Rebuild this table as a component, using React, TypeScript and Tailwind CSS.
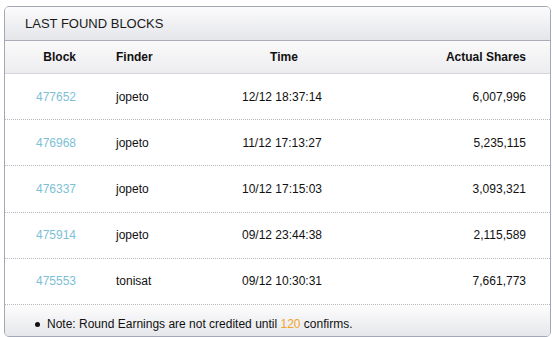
import React from "react";

const rows = [
  { block: "477652", finder: "jopeto", time: "12/12 18:37:14", shares: "6,007,996" },
  { block: "476968", finder: "jopeto", time: "11/12 17:13:27", shares: "5,235,115" },
  { block: "476337", finder: "jopeto", time: "10/12 17:15:03", shares: "3,093,321" },
  { block: "475914", finder: "jopeto", time: "09/12 23:44:38", shares: "2,115,589" },
  { block: "475553", finder: "tonisat", time: "09/12 10:30:31", shares: "7,661,773" },
];

export default function App() {
  return (
    <div className="w-[552px] h-[337px] bg-white overflow-hidden pt-[6px] pl-[4px]" style={{ fontFamily: '"Liberation Sans", Arial, sans-serif' }}>
      <div className="w-[547px] h-[331px] border border-[#a4a7b5] rounded-t-[5px] rounded-b-[5px] bg-white flex flex-col overflow-hidden">
        <div className="h-[34px] shrink-0 border-b border-[#a9acb8] bg-gradient-to-b from-[#fbfbfc] to-[#e5e6ea] flex items-center pl-[20px] text-[13px] text-[#1a1a1a]">
          LAST FOUND BLOCKS
        </div>
        <div className="h-[33px] shrink-0 border-b border-[#d3d6de] bg-gradient-to-b from-[#fafafa] to-[#ededf0] flex items-center text-[12px] font-bold text-[#111]">
          <div className="w-[91px] text-right pr-[20px]">Block</div>
          <div className="w-[100px] pl-[20px]">Finder</div>
          <div className="w-[176px] text-center">Time</div>
          <div className="flex-1 text-right pr-[24px]">Actual Shares</div>
        </div>
        {rows.map((r) => (
          <div key={r.block} className="h-[46.2px] shrink-0 border-b border-dotted border-[#b8b8b8] flex items-center text-[12px] text-[#111]">
            <div className="w-[91px] text-right pr-[20px] text-[#7dbfd6]">{r.block}</div>
            <div className="w-[100px] pl-[20px]">{r.finder}</div>
            <div className="w-[172px] text-center">{r.time}</div>
            <div className="flex-1 text-right pr-[24px]">{r.shares}</div>
          </div>
        ))}
        <div className="flex-1 bg-gradient-to-b from-[#fdfdfd] to-[#e6e7eb] flex items-start pt-[12px] pl-[30px] text-[12px] leading-[14px] text-[#111]">
          <span className="w-[5px] h-[5px] rounded-full bg-[#111] mt-[5px] mr-[7px] shrink-0"></span>
          <span>
            Note: Round Earnings are not credited until <span className="text-[#f5a229]">120</span> confirms.
          </span>
        </div>
      </div>
    </div>
  );
}
